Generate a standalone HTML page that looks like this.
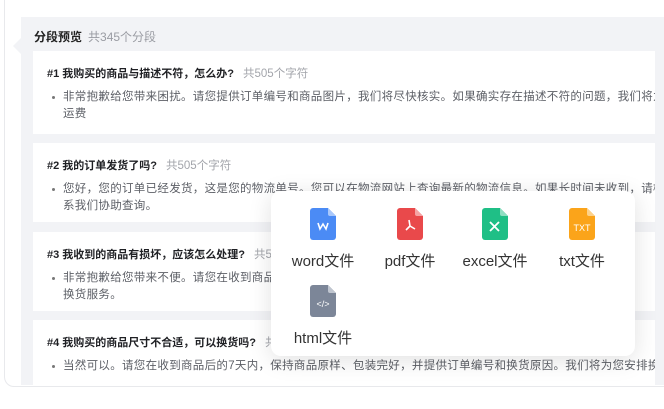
<!DOCTYPE html><html><head><meta charset="utf-8"><style>
body{margin:0;width:664px;height:409px;background:#fff;position:relative;overflow:hidden;font-family:"Liberation Sans","Noto Sans CJK SC",sans-serif;}
.outer{position:absolute;left:4px;top:-10px;width:700px;height:395px;border:1px solid #e8e9ec;border-radius:10px;background:#fff;}
.panel{position:absolute;left:21px;top:17px;width:660px;height:368px;background:#f2f3f6;}
.tri{position:absolute;left:13px;top:38px;width:0;height:0;border-top:8px solid transparent;border-bottom:8px solid transparent;border-right:8px solid #f2f3f6;}
.title{position:absolute;left:34px;top:28px;font-size:12px;font-weight:bold;color:#222;}
.title span{font-weight:normal;color:#9a9ca3;margin-left:6px;}
.card{position:absolute;left:33px;width:622px;background:#fff;overflow:hidden;}
.h{position:absolute;left:14px;top:14px;font-size:11px;font-weight:bold;color:#1f2024;white-space:nowrap;}
.h span{font-weight:normal;color:#a3a5ab;margin-left:9px;font-size:11.5px;}
.b{position:absolute;left:30px;top:38px;font-size:11.5px;color:#5c5f66;line-height:17px;white-space:nowrap;letter-spacing:0.3px;}
.b:before{content:"";position:absolute;left:-11px;top:7px;width:3px;height:3px;border-radius:50%;background:#777;}
.pop{position:absolute;left:271px;top:191px;width:364px;height:165px;background:#fff;border-radius:10px;box-shadow:0 4px 24px rgba(0,0,0,.12);}
.it{position:absolute;width:90px;text-align:center;font-size:15px;color:#333;}
.it svg{display:block;margin:0 auto 10px;}
</style></head><body>
<div class="outer"></div>
<div class="panel"></div><div class="tri"></div>
<div class="title">分段预览<span>共345个分段</span></div>
<div class="card" style="top:51px;height:83px"><div class="h">#1 我购买的商品与描述不符，怎么办?<span>共505个字符</span></div><div class="b">非常抱歉给您带来困扰。请您提供订单编号和商品图片，我们将尽快核实。如果确实存在描述不符的问题，我们将为您办理退货<br>运费</div></div>
<div class="card" style="top:143px;height:79px"><div class="h">#2 我的订单发货了吗?<span>共505个字符</span></div><div class="b">您好，您的订单已经发货，这是您的物流单号。您可以在物流网站上查询最新的物流信息。如果长时间未收到，请检查物流信息<br>系我们协助查询。</div></div>
<div class="card" style="top:232px;height:79px"><div class="h">#3 我收到的商品有损坏，应该怎么处理?<span>共505个字符</span></div><div class="b">非常抱歉给您带来不便。请您在收到商品后的7天内联系我们，并提供订单编号和商品图片，我们将为您<br>换货服务。</div></div>
<div class="card" style="top:320px;height:65px"><div class="h">#4 我购买的商品尺寸不合适，可以换货吗?<span>共505个字符</span></div><div class="b">当然可以。请您在收到商品后的7天内，保持商品原样、包装完好，并提供订单编号和换货原因。我们将为您安排换货服务。</div></div>
<div class="pop">
<div class="it" style="left:7px;top:17px"><svg width="26" height="32" viewBox="0 0 26 32"><path d="M3 0h15l8 8v21a3 3 0 0 1-3 3H3a3 3 0 0 1-3-3V3a3 3 0 0 1 3-3z" fill="#4b8bf5"/><path d="M18 0l8 8h-6a2 2 0 0 1-2-2z" fill="#a9c8fb"/><path d="M8 15l2 6 3-5 3 5 2-6" stroke="#fff" stroke-width="1.6" fill="none"/></svg>word文件</div>
<div class="it" style="left:94px;top:17px"><svg width="26" height="32" viewBox="0 0 26 32"><path d="M3 0h15l8 8v21a3 3 0 0 1-3 3H3a3 3 0 0 1-3-3V3a3 3 0 0 1 3-3z" fill="#e9494b"/><path d="M18 0l8 8h-6a2 2 0 0 1-2-2z" fill="#f5a3a4"/><path d="M12 12l1 6M13 18l-4 4M13 18l5 3" stroke="#fff" stroke-width="1.6" fill="none"/></svg>pdf文件</div>
<div class="it" style="left:179px;top:17px"><svg width="26" height="32" viewBox="0 0 26 32"><path d="M3 0h15l8 8v21a3 3 0 0 1-3 3H3a3 3 0 0 1-3-3V3a3 3 0 0 1 3-3z" fill="#1fbf86"/><path d="M18 0l8 8h-6a2 2 0 0 1-2-2z" fill="#8fdfc2"/><path d="M8 14l9 9M17 14l-9 9" stroke="#fff" stroke-width="1.8"/></svg>excel文件</div>
<div class="it" style="left:266px;top:17px"><svg width="26" height="32" viewBox="0 0 26 32"><path d="M3 0h15l8 8v21a3 3 0 0 1-3 3H3a3 3 0 0 1-3-3V3a3 3 0 0 1 3-3z" fill="#fba41a"/><path d="M18 0l8 8h-6a2 2 0 0 1-2-2z" fill="#fdd28b"/><text x="13" y="23" font-size="9" fill="#fff" text-anchor="middle" font-family="Liberation Sans">TXT</text></svg>txt文件</div>
<div class="it" style="left:7px;top:94px"><svg width="26" height="32" viewBox="0 0 26 32"><path d="M3 0h15l8 8v21a3 3 0 0 1-3 3H3a3 3 0 0 1-3-3V3a3 3 0 0 1 3-3z" fill="#7c8698"/><path d="M18 0l8 8h-6a2 2 0 0 1-2-2z" fill="#c0c6d0"/><text x="13" y="22" font-size="9" fill="#fff" text-anchor="middle" font-family="Liberation Sans">&lt;/&gt;</text></svg>html文件</div>
</div>
</body></html>
